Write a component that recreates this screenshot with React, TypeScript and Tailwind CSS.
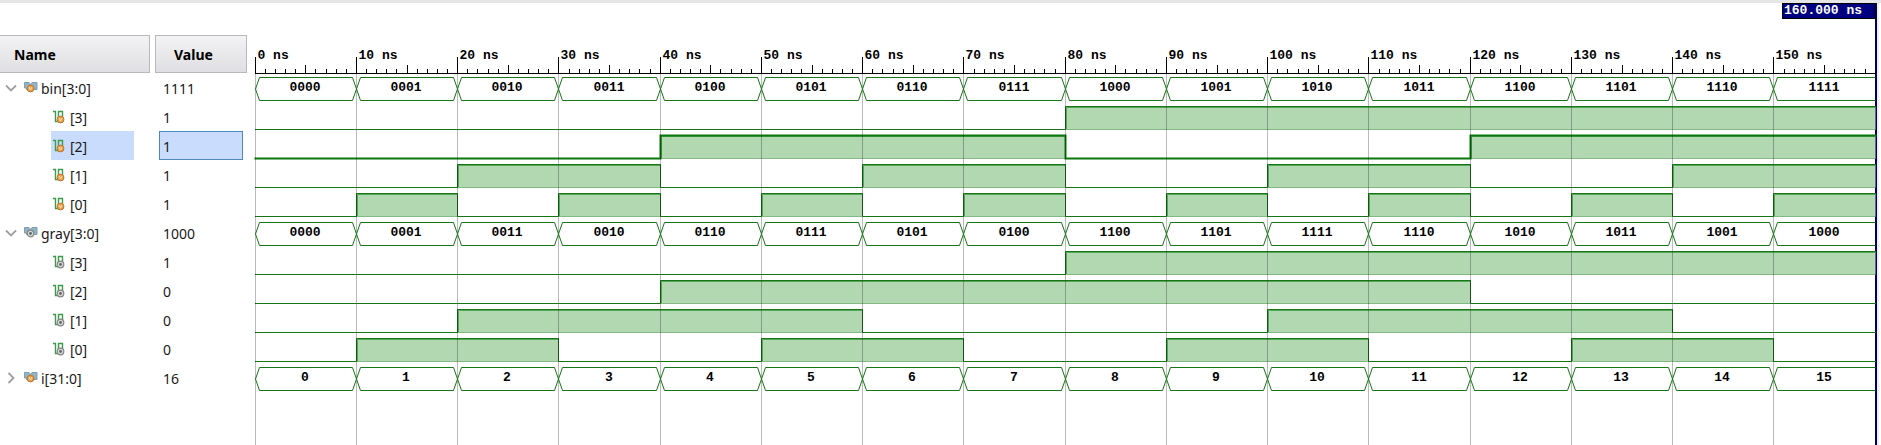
import { useLayoutEffect, useRef, useState } from "react";

type Kind = "driven" | "wire";
type Signal = { id: string; label: string; value: string; kind: Kind; bits?: string; parent?: string; bus?: string[] };

const BIN = ["0000", "0001", "0010", "0011", "0100", "0101", "0110", "0111", "1000", "1001", "1010", "1011", "1100", "1101", "1110", "1111"];
const GRAY = ["0000", "0001", "0011", "0010", "0110", "0111", "0101", "0100", "1100", "1101", "1111", "1110", "1010", "1011", "1001", "1000"];
const STEPS = 16;
const ROW = 29;
const RULER = 38;
const GREEN = "#177517";

const bit = (words: string[], n: number) => words.map((w) => w[3 - n]).join("");

const bitRows = (parent: string, words: string[], kind: Kind): Signal[] =>
  [3, 2, 1, 0].map((n) => ({
    id: `${parent}${n}`,
    label: `[${n}]`,
    value: bit(words, n)[STEPS - 1],
    kind,
    bits: bit(words, n),
    parent,
  }));

const SIGNALS: Signal[] = [
  { id: "bin", label: "bin[3:0]", value: "1111", kind: "driven", bus: BIN },
  ...bitRows("bin", BIN, "driven"),
  { id: "gray", label: "gray[3:0]", value: "1000", kind: "wire", bus: GRAY },
  ...bitRows("gray", GRAY, "wire"),
  { id: "i", label: "i[31:0]", value: "16", kind: "driven", bus: BIN.map((_, i) => String(i)) },
];

function Badge({ kind, cx, cy }: { kind: Kind; cx: number; cy: number }) {
  if (kind === "driven") {
    return (
      <g>
        <circle cx={cx} cy={cy} r="3.4" fill="#eda04a" stroke="#b9762f" />
        <path d={`M${cx - 1.5} ${cy - 1.5}l1.5 3 1.5-3`} fill="none" stroke="#fbe3b8" />
      </g>
    );
  }
  return (
    <g>
      <circle cx={cx} cy={cy} r="3.3" fill="#d6d6d6" stroke="#858585" strokeWidth="1.2" />
      <circle cx={cx} cy={cy} r="1.4" fill="#666" />
    </g>
  );
}

function BusIcon({ kind }: { kind: Kind }) {
  return (
    <svg width="14" height="13" viewBox="0 0 14 13" aria-hidden="true" className="shrink-0">
      <path d="M.5 1.500H5l1.500 2L8 1.500h5v7H9l-2.500-2-2 2H2.500v-1.500h-2z" fill="#92b4c6" stroke="#7d9fb1" />
      <Badge kind={kind} cx={6.5} cy={7.5} />
    </svg>
  );
}

function BitIcon({ kind }: { kind: Kind }) {
  return (
    <svg width="12" height="14" viewBox="0 0 12 14" aria-hidden="true" className="shrink-0">
      <path d="M0 1.500h2.500v10h3v-10h4V7" fill="none" stroke="#3c9a4c" strokeWidth="1.400" />
      <Badge kind={kind} cx={7.5} cy={9.5} />
    </svg>
  );
}

function Chevron({ open }: { open: boolean }) {
  return (
    <svg width="12" height="12" viewBox="0 0 12 12" fill="none" stroke="#a0a0a0" strokeWidth="1.800" aria-hidden="true">
      <path d={open ? "M1 3.500l5 5 5-5" : "M3.500 1l5 5-5 5"} />
    </svg>
  );
}

function Ruler({ xs }: { xs: (t: number) => number }) {
  return (
    <g>
      {Array.from({ length: STEPS * 10 }, (_, t) => (
        <line
          key={t}
          x1={xs(t / 10)}
          x2={xs(t / 10)}
          y1={t % 10 === 0 ? 22 : t % 5 === 0 ? 30 : 34}
          y2={RULER}
          stroke="#000"
        />
      ))}
      <line x1={0} x2={xs(STEPS)} y1={RULER + 0.5} y2={RULER + 0.5} stroke="#000" />
      {Array.from({ length: STEPS }, (_, i) => (
        <text key={i} x={xs(i) + 2} y={24} className="fill-black font-['Liberation_Mono',monospace] text-[13px] font-bold">
          {i * 10} ns
        </text>
      ))}
    </g>
  );
}

function BusWave({ words, xs, y }: { words: string[]; xs: (t: number) => number; y: number }) {
  const top = y + 4.5;
  const bottom = y + 27.5;
  const mid = y + 16;
  return (
    <g>
      {words.map((word, i) => {
        const a = xs(i);
        const b = xs(i + 1);
        const end = i === STEPS - 1 ? `H${b}M${b} ${bottom}` : `H${b - 4}L${b} ${mid}L${b - 4} ${bottom}`;
        return (
          <g key={i}>
            <path d={`M${a} ${mid}L${a + 4} ${top}${end}H${a + 4}L${a} ${mid}`} fill="none" stroke={GREEN} />
            <text
              x={Math.round((a + b) / 2) - 1}
              y={y + 18}
              textAnchor="middle"
              className="fill-black font-['Liberation_Mono',monospace] text-[13px] font-bold"
            >
              {word}
            </text>
          </g>
        );
      })}
    </g>
  );
}

function BitWave({ bits, xs, y, strong }: { bits: string; xs: (t: number) => number; y: number; strong: boolean }) {
  const level = (c: string) => (c === "1" ? y + 4.5 : y + 27.5);
  let line = `M${xs(0)} ${level(bits[0])}`;
  const highs: [number, number][] = [];
  for (let i = 0; i < bits.length; i++) {
    if (i > 0 && bits[i] !== bits[i - 1]) line += `V${level(bits[i])}`;
    line += `H${xs(i + 1)}`;
    if (bits[i] === "1") {
      if (i > 0 && bits[i - 1] === "1") highs[highs.length - 1][1] = i + 1;
      else highs.push([i, i + 1]);
    }
  }
  return (
    <g>
      {highs.map(([a, b]) => (
        <g key={a}>
          <rect x={xs(a)} y={y + 4} width={xs(b) - xs(a)} height={23} fill="#b2d8b2" />
          <line x1={xs(a)} x2={xs(b)} y1={y + 27.5} y2={y + 27.5} stroke="#86b886" />
          <path d={`M${xs(a) + 1} ${y + 27}V${y + 5.5}H${xs(b)}`} fill="none" stroke="#55a855" />
        </g>
      ))}
      <path d={line} fill="none" stroke={strong ? "#0a780a" : GREEN} strokeWidth={strong ? 2 : 1} strokeLinecap="square" />
    </g>
  );
}

function Waves({ rows, selected }: { rows: Signal[]; selected: string }) {
  const ref = useRef<HTMLDivElement>(null);
  const [width, setWidth] = useState(1621);

  useLayoutEffect(() => {
    const el = ref.current;
    if (!el) return;
    const measure = () => setWidth(el.clientWidth);
    measure();
    const observer = new ResizeObserver(measure);
    observer.observe(el);
    return () => observer.disconnect();
  }, []);

  const xs = (t: number) => Math.floor((t * width) / STEPS + 0.2) + 0.5;
  return (
    <div ref={ref} className="min-w-0 flex-1">
      <svg width="100%" className="block h-full overflow-visible" role="img" aria-label="Waveforms">
        {rows.map((s, i) =>
          s.bits ? <BitWave key={s.id} bits={s.bits} xs={xs} y={RULER + i * ROW} strong={s.id === selected} /> : null,
        )}
        {Array.from({ length: STEPS }, (_, i) => (
          <line key={i} x1={xs(i)} x2={xs(i)} y1={RULER} y2="100%" stroke="#000" strokeOpacity="0.27" />
        ))}
        {rows.map((s, i) => (s.bus ? <BusWave key={s.id} words={s.bus} xs={xs} y={RULER + i * ROW} /> : null))}
        <Ruler xs={xs} />
      </svg>
    </div>
  );
}

const HEAD = "flex h-[38px] items-center border border-[#b9b9b9] bg-linear-to-b from-[#f3f3f5] to-[#dfdfe3] pt-[2px]";

export default function App() {
  const [open, setOpen] = useState<Record<string, boolean>>({ bin: true, gray: true });
  const [selected, setSelected] = useState("bin2");
  const rows = SIGNALS.filter((s) => !s.parent || open[s.parent]);

  return (
    <main className="flex min-h-screen flex-col border-t-[3px] border-[#e6e6e6] bg-white font-['Noto_Sans','Open_Sans',sans-serif] text-sm text-[#1a1a1a]">
      <div className="flex flex-1 pr-[2px]">
        <table className="mt-8 w-[247px] table-fixed border-collapse self-start">
          <thead>
            <tr>
              <th className="w-[155px] p-0 pr-[5px] text-left font-bold text-black">
                <div className={`${HEAD} border-l-0 pl-[14px]`}>Name</div>
              </th>
              <th className="p-0 text-left font-bold text-black">
                <div className={`${HEAD} pl-[18px]`}>Value</div>
              </th>
            </tr>
          </thead>
          <tbody>
            {rows.map((s) => {
              const isSelected = s.id === selected;
              return (
                <tr key={s.id} className="h-[29px] cursor-default" onClick={() => setSelected(s.id)}>
                  <td className="p-0">
                    {s.parent ? (
                      <div className={`mr-[21px] ml-[51px] flex h-[29px] items-center gap-[5px] pl-[2px] ${isSelected ? "bg-[#c9dcfd]" : ""}`}>
                        <BitIcon kind={s.kind} />
                        <span className="pt-[2px]">{s.label}</span>
                      </div>
                    ) : (
                      <div className="flex h-[29px] items-center pl-[5px]">
                        <button
                          type="button"
                          aria-label={`Toggle ${s.label}`}
                          aria-expanded={!!open[s.id]}
                          className="mr-[7px]"
                          onClick={() => setOpen({ ...open, [s.id]: !open[s.id] })}
                        >
                          <Chevron open={!!open[s.id]} />
                        </button>
                        <BusIcon kind={s.kind} />
                        <span className="ml-[3px] pt-[2px]">{s.label}</span>
                      </div>
                    )}
                  </td>
                  <td className="p-0">
                    <div
                      className={`mr-1 ml-1 flex h-[29px] items-center border pt-[2px] pl-[3px] ${isSelected ? "border-[#4a8ac0] bg-[#c9dcfd]" : "border-transparent"}`}
                    >
                      {s.value}
                    </div>
                  </td>
                </tr>
              );
            })}
          </tbody>
        </table>
        <div className="flex min-w-0 flex-1 border-r-2 border-[#f0f0f0]">
          <div className="ml-2 flex min-w-0 flex-1 flex-col border-r-2 border-[#000060]">
            <div className="flex h-4 items-center self-end border border-black bg-[#000080] pr-3 pl-px font-['Liberation_Mono',monospace] text-[13px] font-bold text-white">
              160.000 ns
            </div>
            <div className="mt-4 flex flex-1">
              <Waves rows={rows} selected={selected} />
            </div>
          </div>
        </div>
      </div>
    </main>
  );
}
